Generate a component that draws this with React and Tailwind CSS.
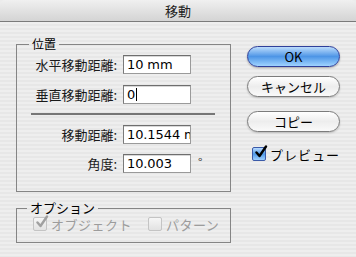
import { useState } from 'react';

const jp = { fontFamily: '"Noto Sans CJK JP", "DejaVu Sans", sans-serif' };

const Field = ({ value, cursor = false }) => (
  <div className="w-[68px] h-[19px] bg-white border border-[#9a9a9a] border-t-[#6e6e6e] border-l-[#7a7a7a] shadow-[inset_0_1px_0_#d8d8d8] flex items-center pl-[3px] overflow-hidden whitespace-nowrap text-[13px] leading-none text-black" style={{ fontFamily: '"DejaVu Sans", sans-serif' }}>
    <span className="tracking-[-0.1px]">{value}</span>
    {cursor && <span className="w-px h-[13px] bg-black ml-px" />}
  </div>
);

const Row = ({ label, children }) => (
  <div className="flex items-center">
    <span className="w-[106px] text-right pr-[6px] text-[13px] text-[#1a1a1a] leading-none">{label}</span>
    {children}
  </div>
);

const Check = ({ checked, disabled, label }) => (
  <div className="flex items-center gap-[4px]">
    <span
      className={
        disabled
          ? 'relative w-[14px] h-[14px] rounded-[2px] border border-[#c4c4c4] bg-gradient-to-b from-[#f6f6f6] to-[#e2e2e2]'
          : 'relative w-[14px] h-[14px] rounded-[2px] border border-[#3b5aa8] bg-gradient-to-b from-[#b9dbff] via-[#4f9ae8] to-[#9ed0ff]'
      }
    >
      {checked && (
        <svg viewBox="0 0 14 14" className="absolute left-[1px] -top-[3px] w-[14px] h-[14px]">
          <path d="M2.5 7.5 L5.5 11 L12 1.5" fill="none" stroke={disabled ? '#a0a0a0' : '#000'} strokeWidth="2.4" strokeLinecap="round" strokeLinejoin="round" />
        </svg>
      )}
    </span>
    <span className={disabled ? 'text-[13px] text-[#9c9c9c] leading-none tracking-[0.5px]' : 'text-[13px] text-black leading-none tracking-[1px]'}>{label}</span>
  </div>
);

const PillButton = ({ children, primary }) => (
  <button
    className={
      primary
        ? 'w-[93px] h-[21px] rounded-full border border-[#2f3f9a] bg-gradient-to-b from-[#bcdcfb] via-[#4d95e6] to-[#9fd3ff] shadow-[0_1px_2px_rgba(0,0,0,0.3)] text-[13px] text-black leading-none'
        : 'w-[93px] h-[21px] rounded-full border border-[#7c7c7c] bg-gradient-to-b from-[#ffffff] via-[#ededed] to-[#fafafa] shadow-[0_1px_2px_rgba(0,0,0,0.2)] text-[13px] text-black leading-none'
    }
  >
    {children}
  </button>
);

export default function App() {
  const [preview] = useState(true);

  return (
    <div className="w-[356px] h-[257px] overflow-hidden bg-[#ececec]" style={jp}>
      <div className="h-[22px] rounded-t-[5px] bg-gradient-to-b from-[#f0f0f0] to-[#d4d4d4] border-b border-[#7a7a7a] flex items-center justify-center">
        <span className="text-[13px] text-[#222] leading-none">移動</span>
      </div>
      <div className="h-[235px] bg-[image:repeating-linear-gradient(180deg,#eeeeee_0px,#eeeeee_2px,#e7e7e7_2px,#e7e7e7_4px)] flex pl-[16px] pt-[15px]">
        <div className="w-[215px] flex flex-col">
          <fieldset className="border border-[#858585] h-[155px] pb-0 px-0">
            <legend className="ml-[12px] px-[3px] text-[12px] leading-[14px] text-black">位置</legend>
            <div className="flex flex-col pt-[4px]">
              <div className="flex flex-col gap-[11px]">
                <Row label="水平移動距離:"><Field value="10 mm" /></Row>
                <Row label="垂直移動距離:"><Field value="0" cursor /></Row>
              </div>
              <div className="ml-[14px] w-[184px] h-[2px] bg-[#777] mt-[9px] mb-[10px]" />
              <div className="flex flex-col gap-[10px]">
                <Row label="移動距離:"><Field value="10.1544 mm" /></Row>
                <Row label="角度:">
                  <Field value="10.003" />
                  <span className="ml-[7px] text-[12px] leading-none text-[#333] -mt-[4px]">°</span>
                </Row>
              </div>
            </div>
          </fieldset>
          <fieldset className="mt-[9px] border border-[#858585] h-[42px] px-0 pb-0">
            <legend className="ml-[10px] px-[3px] text-[13px] leading-[14px] text-black">オプション</legend>
            <div className="flex items-center gap-[16px] pl-[16px] pt-[2px]">
              <Check checked disabled label="オブジェクト" />
              <Check disabled label="パターン" />
            </div>
          </fieldset>
        </div>
        <div className="ml-[16px] flex flex-col pt-[9px]">
          <PillButton primary>OK</PillButton>
          <div className="h-[9px]" />
          <PillButton>キャンセル</PillButton>
          <div className="h-[14px]" />
          <PillButton>コピー</PillButton>
          <div className="pl-[5px] mt-[15px]">
            <Check checked={preview} label="プレビュー" />
          </div>
        </div>
      </div>
    </div>
  );
}
